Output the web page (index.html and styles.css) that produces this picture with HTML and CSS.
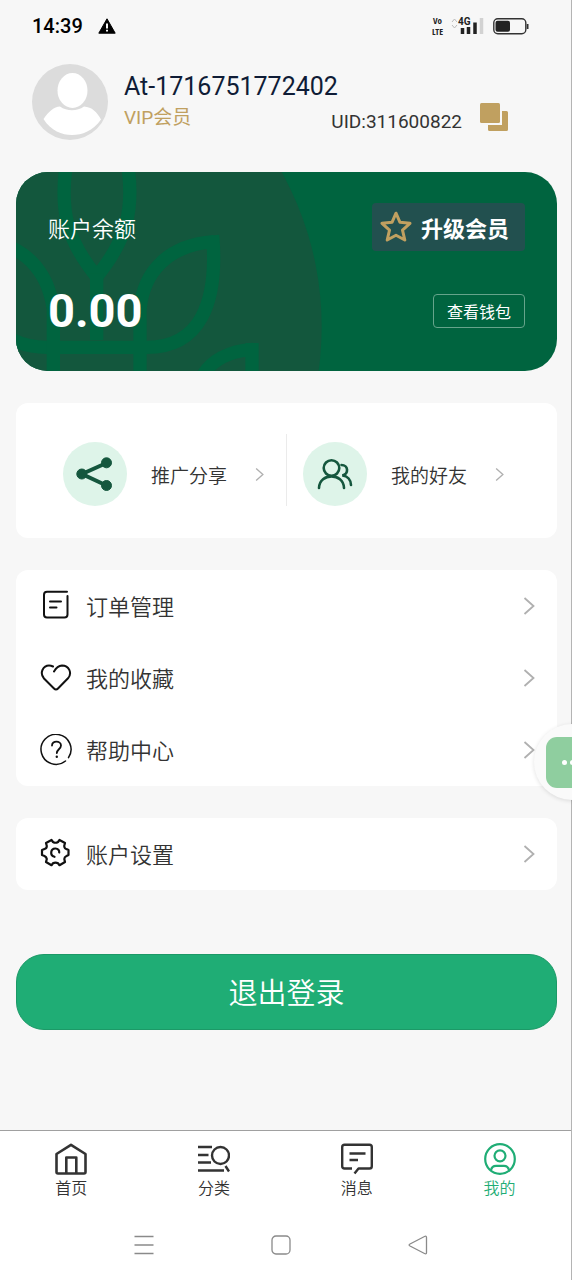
FILE: index.html
```html
<!DOCTYPE html>
<html lang="zh-CN">
<head>
<meta charset="utf-8">
<meta name="viewport" content="width=device-width, initial-scale=1">
<title>我的</title>
<link rel="stylesheet" href="styles.css">
</head>
<body>
<svg class="defs" width="0" height="0" aria-hidden="true">
  <symbol id="chevron" viewBox="0 0 12 20"><path d="M1.500 2 10.500 10 1.500 18" fill="none" stroke="currentColor" stroke-width="1.800"/></symbol>
</svg>

<header class="status">
  <span class="time">14:39</span>
  <svg class="warn" viewBox="0 0 18 16"><path d="M9 .8 17.200 15.200H.8Z" fill="#000" stroke="#000" stroke-linejoin="round"/><path d="M9 5.500v5M9 11.800v1.800" stroke="#f7f7f7" stroke-width="2"/></svg>
  <div class="status-right">
    <span class="volte"><span>Vo</span><span>LTE</span></span>
    <span class="signal">
      <svg viewBox="0 0 34 18"><path d="M1 5 3.500 2 6 5M1 8l2.500 3L6 8" fill="none" stroke="#bbb"/><path d="M11.500 11v6M17.500 10v7M24 5.500V17" stroke="#222" stroke-width="3.500"/><path d="M30.500 1v16" stroke="#d2d2d2" stroke-width="3.500"/></svg>
      <span class="net">4G</span>
    </span>
    <svg class="battery" viewBox="0 0 36 17"><rect x=".8" y=".8" width="32" height="15" rx="4" fill="none" stroke="#333" stroke-width="1.400"/><rect x="2.500" y="2.800" width="14.500" height="11" rx="2" fill="#222"/><path d="M34.600 6v5" stroke="#333" stroke-width="1.800"/></svg>
  </div>
</header>

<main class="content">
  <section class="profile">
    <svg class="avatar" viewBox="0 0 76 76"><circle cx="38" cy="38" r="38" fill="#dcdcdc"/><ellipse cx="40.500" cy="26.500" rx="15" ry="17.500" fill="#fff"/><path d="M11.500 55C17 47 22 43 28 42.500c7 5 17 5 24 0C60 43 65 48 69 55.500 61 67 50 71 40 71S19 67 11.500 55Z" fill="#fff"/></svg>
    <div class="who">
      <h1 class="name">At-1716751772402</h1>
      <div class="who-row">
        <span class="vip">VIP会员</span>
        <span class="uid">UID:311600822</span>
        <button class="copy" type="button" aria-label="复制"><svg viewBox="0 0 28 28" fill="#c0a060"><rect width="20" height="20" rx="1.500"/><path d="M22 8h4.500q1.500 0 1.500 1.500v17q0 1.500-1.500 1.500h-17Q8 28 8 26.500V22h14Z"/></svg></button>
      </div>
    </div>
  </section>

  <section class="balance">
    <svg class="pattern" viewBox="48 36 1623 597" preserveAspectRatio="xMinYMin slice" aria-hidden="true">
      <circle cx="9" cy="500" r="956" fill="#13573d"/>
      <g fill="none" stroke="#00643f" stroke-width="40">
        <path d="M198 20C180 150 200 240 290 350 380 240 402 150 384 20"/>
        <path d="M290 340V540"/>
        <path d="M640 245C510 255 430 330 420 450V640M638 226C655 430 600 562 440 562H140C90 562 60 552 30 535"/>
        <path d="M-60 240C70 250 145 330 160 450V640"/>
        <path d="M760 568C690 572 630 600 600 660M756 549V650"/>
      </g>
    </svg>
    <div class="balance-row">
      <span class="balance-label">账户余额</span>
      <button class="upgrade" type="button"><svg viewBox="0 0 32 32"><path d="M16 2.200 20 11.300 30 12.300 22.500 19.200 24.800 29 16 24.300 7.200 29 9.500 19.200 2 12.300 12 11.300Z" fill="none" stroke="#c0a060" stroke-width="3" stroke-linejoin="round"/></svg>升级会员</button>
    </div>
    <div class="balance-row">
      <strong class="amount">0.00</strong>
      <button class="wallet" type="button">查看钱包</button>
    </div>
  </section>

  <section class="card shortcuts">
    <a class="shortcut" href="#share">
      <svg class="disc" viewBox="0 0 64 64"><circle cx="32" cy="32" r="32" fill="#def4e9"/><g fill="#15573e" stroke="#15573e"><path d="M43.500 21 19 32 43.500 43.500" fill="none" stroke-width="4"/><circle cx="18.800" cy="32" r="5"/><circle cx="43.500" cy="20.800" r="5"/><circle cx="43.500" cy="43.500" r="5"/></g></svg>
      <span>推广分享</span>
      <svg class="chev-s"><use href="#chevron"/></svg>
    </a>
    <a class="shortcut" href="#friends">
      <svg class="disc" viewBox="0 0 64 64"><circle cx="32" cy="32" r="32" fill="#def4e9"/><g fill="none" stroke="#15573e" stroke-width="2.600" stroke-linecap="round"><circle cx="28.500" cy="26" r="7.800"/><path d="M16 46c.5-15.500 24.500-15.500 25 0"/><path d="M38.500 23c7 0 7.500 9 .8 10.500 5.500.5 8.500 4.500 8.700 9.500"/></g></svg>
      <span>我的好友</span>
      <svg class="chev-s"><use href="#chevron"/></svg>
    </a>
  </section>

  <nav class="card menu">
    <a class="item" href="#orders">
      <svg class="item-icon" viewBox="0 0 32 32"><g fill="none" stroke="#111" stroke-width="2" stroke-linecap="round" stroke-linejoin="round"><path d="M27 1.800H7q-3 0-3 3V24.500q0 3 3 3H24.500q3 0 3-3V6"/><path d="M10 11.500H21M10 17.500h6.500"/></g></svg>
      <span>订单管理</span><svg class="chev"><use href="#chevron"/></svg>
    </a>
    <a class="item" href="#favorites">
      <svg class="item-icon" viewBox="0 0 32 32"><path d="M14 9.500C16 6 18 3.800 22 3.500c7 0 10.500 7.500 6 12.800L18 26.500q-2 2-4 0L4 16.500C-1 10.500 3.500 3.500 9 3.500q2 0 4 1" fill="none" stroke="#111" stroke-width="2" stroke-linecap="round"/></svg>
      <span>我的收藏</span><svg class="chev"><use href="#chevron"/></svg>
    </a>
    <a class="item" href="#help">
      <svg class="item-icon" viewBox="0 0 32 32"><g fill="none" stroke="#111" stroke-width="1.500" stroke-linecap="round"><path d="M25.500 27A15 15 0 1 1 28.500 23.700"/><path d="M12 11.500c0-5.500 9-5 9 0 0 3.500-4.200 4-4.200 7.500" stroke-width="1.800"/></g><circle cx="16.800" cy="22.800" r="1.200" fill="#111"/></svg>
      <span>帮助中心</span><svg class="chev"><use href="#chevron"/></svg>
    </a>
  </nav>

  <nav class="card menu">
    <a class="item" href="#settings">
      <svg class="item-icon" viewBox="0 0 32 32"><g fill="none" stroke="#111" stroke-width="2.200" stroke-linejoin="round" stroke-linecap="round"><path d="M11.500 2 13 4Q15.500 5.500 18 4L19.500 2 25 5 24.200 8Q24.500 11 27 11.300L28.500 12V17L26.500 18Q24.300 19 24.300 21L25 24 19.500 27.200 18 25.300Q15.500 23.800 13 25.300L11.500 27.200 6 24 6.800 21Q6.500 19 4.500 18L2 17V12L4.500 11Q6.800 10.500 6.800 8L6 5Z"/><path d="M14.500 18.800C9.500 17.500 10.500 10.300 15.500 10.500 18 10.600 19.500 12.500 19.200 14.500"/></g></svg>
      <span>账户设置</span><svg class="chev"><use href="#chevron"/></svg>
    </a>
  </nav>

  <button class="logout" type="button">退出登录</button>
</main>

<button class="floating" type="button" aria-label="更多"><span class="floating-face"><i></i><i></i><i></i></span></button>

<footer class="bottom">
  <nav class="tabs">
    <a class="tab" href="#home"><svg viewBox="0 0 32 32" fill="none" stroke="#333" stroke-width="2.600" stroke-linejoin="round"><path d="M1.500 11 16 1.800 30.500 11V29q0 1.500-1.500 1.500H3Q1.500 30.500 1.500 29Z"/><path d="M11.300 30V14.500H21.300V30"/></svg>首页</a>
    <a class="tab" href="#category"><svg viewBox="0 0 32 32" fill="none" stroke="#333" stroke-width="2.400"><path d="M0 4H14M0 12H10.500M0 19.500H13M0 27.500H26M27.500 23 31 28.500"/><circle cx="22.500" cy="12.500" r="8.500"/></svg>分类</a>
    <a class="tab" href="#messages"><svg viewBox="0 0 32 32" fill="none" stroke="#333" stroke-width="2.400" stroke-linejoin="round"><path d="M11 25.500H3.500Q1.200 25.500 1.200 23.200V4Q1.200 1.700 3.500 1.700h25q2.300 0 2.300 2.300V23.200q0 2.300-2.300 2.300H17.500L13.500 30.500"/><path d="M8.500 10.500h16M8.500 17H17"/></svg>消息</a>
    <a class="tab tab-active" href="#me" aria-current="page"><svg viewBox="0 0 32 32" fill="none" stroke="#1fad75" stroke-width="2.200"><circle cx="16" cy="16" r="14.800"/><circle cx="16" cy="12.800" r="5.500"/><path d="M7 27Q8 22.800 12 22.800h8q4 0 5 4.200"/></svg>我的</a>
  </nav>
  <div class="sysnav">
    <button type="button" aria-label="最近任务"><svg viewBox="0 0 20 20"><path d="M.5 1.500h19M.5 10h19M.5 18.500h19"/></svg></button>
    <button type="button" aria-label="主屏幕"><svg viewBox="0 0 20 20"><rect x="1" y="1" width="18" height="18" rx="4"/></svg></button>
    <button type="button" aria-label="返回"><svg viewBox="0 0 20 20"><path d="M2 9 16.500 1.500q2-1 2 1v15q0 2-2 1L2 11q-1.800-1 0-2Z"/></svg></button>
  </div>
</footer>
</body>
</html>
```
FILE: styles.css
```css
* { box-sizing: border-box; }

body {
  margin: 0;
  min-height: 100vh;
  display: flex;
  flex-direction: column;
  background: #f7f7f7;
  border-right: 1px solid #b4b4b4;
  overflow-x: hidden;
  font-family: Roboto, "Noto Sans CJK SC", sans-serif;
  color: #333;
}

a { color: inherit; text-decoration: none; }

button {
  margin: 0;
  padding: 0;
  border: 0;
  background: none;
  color: inherit;
  font: inherit;
  cursor: pointer;
}

svg { display: block; flex: none; }

.defs { position: absolute; }

.status {
  display: flex;
  align-items: center;
  height: 52px;
  padding: 0 42px 0 32px;
  color: #000;
}
.time { font-size: 20px; font-weight: 500; }
.warn { width: 18px; height: 16px; margin-left: 15px; }
.status-right {
  display: flex;
  align-items: center;
  gap: 8px;
  margin-left: auto;
  color: #222;
}
.volte {
  display: flex;
  flex-direction: column;
  align-items: center;
  font-family: "Liberation Sans Narrow", "Open Sans Condensed", "Roboto Condensed", Roboto, sans-serif;
  font-size: 9px;
  line-height: 11px;
  font-weight: 700;
}
.signal { position: relative; }
.signal svg { width: 34px; height: 18px; }
.net {
  position: absolute;
  left: 7px;
  top: 0;
  font-size: 10px;
  line-height: 9px;
  font-weight: 700;
  background: #f7f7f7;
}
.battery { width: 36px; height: 17px; }

.content {
  display: flex;
  flex-direction: column;
  gap: 32px;
  padding: 12px 14px 32px 16px;
}

.profile {
  display: flex;
  align-items: center;
  gap: 16px;
  padding: 0 49px 0 16px;
}
.avatar { width: 76px; height: 76px; }
.who { flex: 1; }
.name {
  margin: 0;
  font-size: 25px;
  line-height: 32px;
  font-weight: 400;
  color: #0f1c36;
}
.who-row { display: flex; height: 30px; }
.vip { font-size: 19px; line-height: 30px; color: #c0a060; }
.uid {
  align-self: flex-end;
  margin-left: auto;
  font-size: 19px;
  line-height: 22px;
}
.copy { align-self: flex-start; margin-left: 18px; }
.copy svg { width: 28px; height: 28px; }

.balance {
  position: relative;
  display: flex;
  flex-direction: column;
  gap: 32px;
  padding: 31px 32px 32px;
  border-radius: 32px;
  background: #00643f;
  color: #fff;
  overflow: hidden;
}
.pattern { position: absolute; inset: 0; width: 100%; height: 100%; }
.balance-row {
  position: relative;
  display: flex;
  align-items: center;
  justify-content: space-between;
}
.balance-label { font-size: 22px; font-weight: 350; }
.upgrade {
  display: flex;
  align-items: center;
  gap: 9px;
  height: 48px;
  padding: 0 16px 0 8px;
  border-radius: 4px;
  background: #22504f;
  font-size: 22px;
  font-weight: 700;
}
.upgrade svg { width: 32px; height: 32px; }
.amount { font-size: 47px; line-height: 56px; }
.wallet {
  height: 34px;
  padding: 0 13px;
  border: 1px solid #66a48b;
  border-radius: 4px;
  font-size: 16px;
}

.card { border-radius: 12px; background: #fff; }

.shortcuts { display: flex; padding: 31px 31px 32px; }
.shortcut {
  flex: 1;
  display: flex;
  align-items: center;
  height: 72px;
  padding: 8px 22px 0 16px;
  font-size: 19px;
  font-weight: 350;
}
.shortcut + .shortcut { border-left: 1px solid #ebebeb; }
.disc { width: 64px; height: 64px; margin-right: 24px; }
.chev-s { width: 9px; height: 15px; margin-left: auto; color: #b0b0b0; }

.item {
  display: flex;
  align-items: center;
  gap: 14px;
  height: 72px;
  padding: 0 22px 0 24px;
  font-size: 22px;
  font-weight: 350;
}
.item span { padding-bottom: 3px; }
.item-icon { width: 32px; height: 32px; }
.chev { width: 12px; height: 20px; margin-left: auto; color: #b0b0b0; }

.logout {
  height: 76px;
  margin-top: 32px;
  padding-bottom: 3px;
  border: 1px solid #1c9967;
  border-radius: 28px;
  background: #1fad75;
  color: #fff;
  font-size: 29px;
  font-weight: 350;
}

.floating {
  position: fixed;
  top: 724px;
  right: -38px;
  width: 76px;
  height: 76px;
  padding: 12px;
  border-radius: 50%;
  background: #fafafa;
  box-shadow: 0 1px 4px #0000001f;
}
.floating-face {
  display: flex;
  align-items: center;
  justify-content: center;
  gap: 3px;
  height: 51px;
  border-radius: 11px;
  background: #8fce9f;
}
.floating-face i { width: 5px; height: 5px; border-radius: 50%; background: #fff; }

.bottom {
  margin-top: auto;
  border-top: 1px solid #a0a0a0;
  background: #fff;
}
.tabs { display: flex; }
.tab {
  flex: 1;
  display: flex;
  flex-direction: column;
  align-items: center;
  gap: 4px;
  padding-top: 12px;
  font-size: 16px;
  line-height: 20px;
  font-weight: 350;
}
.tab svg { width: 32px; height: 32px; }
.tab-active { color: #1fad75; }

.sysnav {
  display: flex;
  justify-content: center;
  gap: 117px;
  padding: 36px 9px 25px 0;
}
.sysnav svg {
  width: 20px;
  height: 20px;
  fill: none;
  stroke: #8a8a8a;
  stroke-width: 1.3px;
}
```
